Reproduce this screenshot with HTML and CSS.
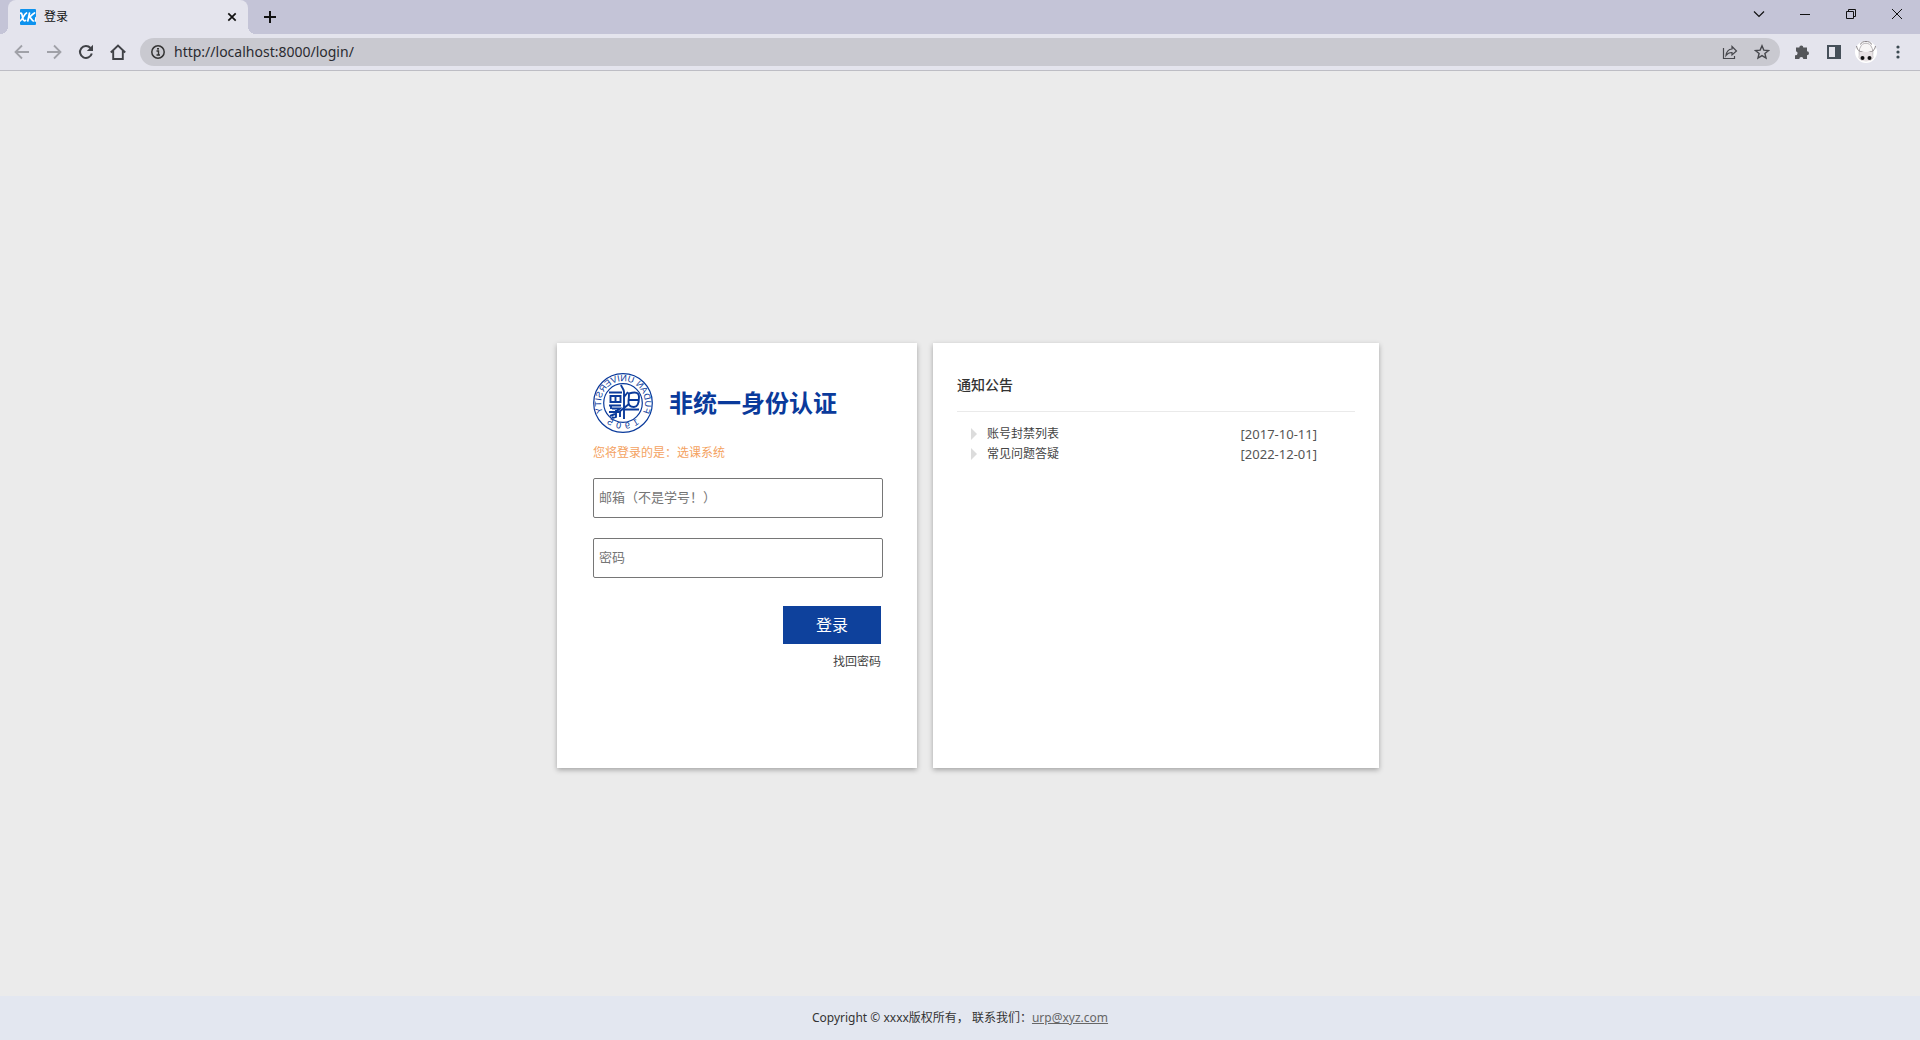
FILE: index.html
```html
<!DOCTYPE html>
<html lang="zh-CN">
<head>
<meta charset="utf-8">
<title>登录</title>
<link rel="stylesheet" href="styles.css">
</head>
<body>
<header class="browser">
  <div class="tabstrip">
    <div class="tab">
      <svg class="favicon" viewBox="0 0 16 16" width="16" height="16" aria-hidden="true"><rect width="16" height="16" rx="1" fill="#0d92ee"/><g fill="none" stroke="#fff" stroke-width="1.7" stroke-linecap="round"><path d="M0 4.500c2-1 2 1 2.500 3.500s1 4.500 3 3.500M6.500 4C4 5 3 10.500 0 12M9.500 4L7.800 12M14.500 4c-2 1-3.500 3-5.500 4.500 2.500-.5 2.500 3.500 4.500 3.500M16 8.500l-.5 3.500"/></g></svg>
      <span class="tab-title">登录</span>
      <button class="icon-btn tab-close" aria-label="关闭"><svg viewBox="0 0 16 16" width="16" height="16"><path d="M4.300 4.300l7.400 7.400M11.700 4.300l-7.400 7.400" stroke="#111" stroke-width="1.700"/></svg></button>
    </div>
    <button class="icon-btn new-tab" aria-label="新标签页"><svg viewBox="0 0 16 16" width="16" height="16"><path d="M8 2v12M2 8h12" stroke="#111" stroke-width="2"/></svg></button>
    <div class="window-controls">
      <button class="icon-btn" aria-label="搜索标签页"><svg viewBox="0 0 16 16" width="16" height="16"><path d="M3 5.500l5 5 5-5" fill="none" stroke="#111" stroke-width="1.200"/></svg></button>
      <button class="icon-btn" aria-label="最小化"><svg viewBox="0 0 16 16" width="16" height="16"><path d="M3 8.500h10" stroke="#111"/></svg></button>
      <button class="icon-btn" aria-label="还原"><svg viewBox="0 0 16 16" width="16" height="16"><path d="M3.500 5.500h7v7h-7zM5.500 5.500v-2h7v7h-2" fill="none" stroke="#111"/></svg></button>
      <button class="icon-btn" aria-label="关闭窗口"><svg viewBox="0 0 16 16" width="16" height="16"><path d="M3 3l10 10M13 3L3 13" stroke="#111"/></svg></button>
    </div>
  </div>
  <div class="toolbar">
    <button class="icon-btn" aria-label="后退"><svg viewBox="0 0 16 16" width="16" height="16"><path d="M15 8H2M8 1.500L1.500 8 8 14.500" fill="none" stroke="#a0a1a8" stroke-width="1.800"/></svg></button>
    <button class="icon-btn" aria-label="前进"><svg viewBox="0 0 16 16" width="16" height="16"><path d="M1 8h13M8 1.500L14.500 8 8 14.500" fill="none" stroke="#a0a1a8" stroke-width="1.800"/></svg></button>
    <button class="icon-btn" aria-label="刷新"><svg viewBox="0 0 16 16" width="16" height="16"><path d="M13.800 9.500A6 6 0 1 1 12.500 4" fill="none" stroke="#404247" stroke-width="2"/><path d="M15 .8V7H8.800z" fill="#404247"/></svg></button>
    <button class="icon-btn" aria-label="主页"><svg viewBox="0 0 16 16" width="16" height="16"><path d="M.8 8.500L8 1.500l7.200 7M3.200 7v8h9.600V7" fill="none" stroke="#404247" stroke-width="1.900"/></svg></button>
    <div class="address">
      <svg viewBox="0 0 16 16" width="16" height="16" aria-hidden="true"><circle cx="8" cy="8" r="6.200" fill="none" stroke="#333" stroke-width="1.500"/><path d="M6.500 7h2v4M6.500 11h3.500" fill="none" stroke="#333" stroke-width="1.400"/><rect x="7" y="4" width="2" height="1.600" fill="#333"/></svg>
      <input class="url" type="text" aria-label="地址" value="http://localhost:8000/login/">
      <button class="icon-btn" aria-label="分享"><svg viewBox="0 0 16 16" width="16" height="16"><path d="M1.500 4v10.500h11V12M10 2.500L14.500 7 10 11V8.500C7 8.300 5.500 9.500 4 11.500 4.500 7.500 6.500 5.300 10 5z" fill="none" stroke="#46474c" stroke-width="1.200"/></svg></button>
      <button class="icon-btn" aria-label="收藏"><svg viewBox="0 0 16 16" width="16" height="16"><path d="M8 1.800l1.800 4.300 4.700.4-3.600 3 1.100 4.600L8 11.600l-4 2.500 1.100-4.600-3.600-3 4.700-.4z" fill="none" stroke="#46474c" stroke-width="1.400"/></svg></button>
    </div>
    <button class="icon-btn" aria-label="扩展程序"><svg viewBox="0 0 16 16" width="16" height="16"><path d="M2 3.500h3.300a2 2 0 1 1 4 0H13v3.700a2 2 0 1 1 0 4V15H9.300a2 2 0 0 0-4 0H1v-3.800a2 2 0 0 0 1-4z" fill="#54565a"/></svg></button>
    <button class="icon-btn" aria-label="侧边栏"><svg viewBox="0 0 16 16" width="16" height="16"><path d="M1 1h14v14H1zM3 3v10h6V3z" fill="#46505a" fill-rule="evenodd"/></svg></button>
    <button class="icon-btn avatar" aria-label="个人资料"><svg viewBox="0 0 22 22" width="22" height="22"><circle cx="11" cy="11" r="11" fill="#fff"/><path d="M5.500 6C3 10 5 14 4 16c0 5 14 5 14 0-1-2 1-6-1.500-10C15 1 7 1 5.500 6z" fill="#f8f6f6" stroke="#aaa5a8" stroke-width=".8"/><path d="M1.500 5c.5 3 2 5 4 5.500 3 1.500 8 1.500 11 0 2-.5 3.500-2.500 4-5.500M5.500 3.500C6 1 9 .5 11 .5s5 .5 5.500 3" fill="none" stroke="#8b8589" stroke-width="1"/><path d="M5 11h12l1 6-3 3H7l-3-3z" fill="#e8e2e4"/><circle cx="7.500" cy="17" r="2" fill="#111"/><circle cx="14.500" cy="17" r="2" fill="#111"/></svg></button>
    <button class="icon-btn" aria-label="菜单"><svg viewBox="0 0 16 16" width="16" height="16" fill="#3c4a52"><circle cx="8" cy="3" r="1.600"/><circle cx="8" cy="8" r="1.600"/><circle cx="8" cy="13" r="1.600"/></svg></button>
  </div>
</header>

<main class="page">
  <section class="card login">
    <div class="brand">
      <svg class="emblem" viewBox="0 0 60 60" width="60" height="60" role="img" aria-label="校徽">
        <defs>
          <path id="arc-top" d="M14.400 45.600A22 22 0 1 1 45.600 45.600"/>
          <path id="arc-bottom" d="M7 43A27 27 0 0 0 53 43"/>
        </defs>
        <g transform="matrix(-1 0 0 1 60 0)" fill="#0a3a9b">
          <circle cx="30" cy="30" r="29.300" fill="none" stroke="#0a3a9b" stroke-width="1.200"/>
          <circle cx="30" cy="30" r="19.300" fill="none" stroke="#0a3a9b" stroke-width="1.200"/>
          <text class="emblem-text"><textPath href="#arc-top" startOffset="50%" text-anchor="middle">FUDAN UNIVERSITY</textPath></text>
          <text class="emblem-text"><textPath href="#arc-bottom" startOffset="50%" text-anchor="middle">1&#160;&#160;9&#160;&#160;0&#160;&#160;5</textPath></text>
        </g>
        <g fill="none" stroke="#0a3a9b" stroke-width="1.900">
          <path d="M28 12c1 3 3 4 3 7v27M31 24l4-5M26 39l10-8"/>
          <path d="M36 20.500c7-2 10-1 10 3.500s-1 10-5 10-6-2-5.500-6 .5-4 .5-7.500zM36 27h9M31 36.500h15"/>
          <path d="M16 19.500h13M17.500 23h10v6h-10zM22.500 23v6M16 32.500h12M19 35.500h8l-5 4M16 39h12M23 37v7c-2 1-3 1-4 0M22 41l-5 2M18 32v4M27 38v6"/>
        </g>
      </svg>
      <h1 class="title">非统一身份认证</h1>
    </div>
    <p class="target">您将登录的是：选课系统</p>
    <form class="form">
      <input class="field" type="text" aria-label="邮箱" placeholder="邮箱（不是学号！）">
      <input class="field" type="password" aria-label="密码" placeholder="密码">
      <button class="submit" type="button">登录</button>
      <a class="recover" href="#">找回密码</a>
    </form>
  </section>
  <section class="card notices">
    <h2 class="notices-title">通知公告</h2>
    <ul class="notice-list">
      <li class="notice"><a href="#">账号封禁列表</a><time>[2017-10-11]</time></li>
      <li class="notice"><a href="#">常见问题答疑</a><time>[2022-12-01]</time></li>
    </ul>
  </section>
</main>
<footer class="footer">Copyright © xxxx版权所有，&nbsp;联系我们：<a href="mailto:urp@xyz.com">urp@xyz.com</a></footer>
</body>
</html>
```
FILE: styles.css
```css
* { box-sizing: border-box; }

body {
  margin: 0;
  min-height: 100vh;
  display: flex;
  flex-direction: column;
  background: #ebebeb;
  color: #333;
  font: 12px/20px "Noto Sans", "Noto Sans CJK SC", sans-serif;
}

h1, h2, p, ul { margin: 0; padding: 0; }

.icon-btn {
  display: grid;
  place-items: center;
  flex: none;
  padding: 0;
  border: 0;
  background: none;
}

.tabstrip {
  display: flex;
  align-items: center;
  height: 34px;
  padding-left: 8px;
  background: #c4c4d7;
}

.tab {
  position: relative;
  display: flex;
  align-items: center;
  gap: 8px;
  width: 240px;
  height: 34px;
  padding: 0 8px 0 12px;
  border-radius: 8px 8px 0 0;
  background: #e4e4ed;
  color: #111;
}

.tab::before,
.tab::after {
  content: "";
  position: absolute;
  bottom: 0;
  width: 8px;
  height: 8px;
}

.tab::before {
  left: -8px;
  background: radial-gradient(circle at 0 0, #c4c4d7 8px, #e4e4ed 8px);
}

.tab::after {
  right: -8px;
  background: radial-gradient(circle at 100% 0, #c4c4d7 8px, #e4e4ed 8px);
}

.tab-title { flex: 1; }

.new-tab { margin-left: 14px; }

.window-controls {
  display: flex;
  gap: 30px;
  margin: 0 15px 6px auto;
}

.toolbar {
  display: flex;
  align-items: center;
  gap: 16px;
  height: 37px;
  padding: 0 14px;
  border-bottom: 1px solid #bdbdc4;
  background: #e4e4ed;
}

.address {
  flex: 1;
  display: flex;
  align-items: center;
  gap: 16px;
  height: 28px;
  margin: 0 -2px;
  padding: 0 10px;
  border-radius: 14px;
  background: #c9c9d0;
}

.avatar { margin: 0 -3px; }

.url {
  flex: 1;
  min-width: 0;
  margin-left: -8px;
  padding: 0;
  border: 0;
  background: none;
  color: #2b2b30;
  font: 14px/20px "Noto Sans", sans-serif;
}

.page {
  flex: 1;
  display: flex;
  justify-content: center;
  align-items: center;
  gap: 16px;
  padding: 44px 0 0 16px;
}

.card {
  min-height: 425px;
  background: #fff;
  box-shadow: 0 2px 5px rgba(0, 0, 0, .3);
}

.login {
  width: 360px;
  padding: 30px 34px 30px 36px;
}

.brand {
  display: flex;
  align-items: center;
  gap: 16px;
}

.emblem-text {
  font: 400 9px "Liberation Sans", sans-serif;
}

.title {
  color: #0a3a9b;
  font-size: 24px;
  line-height: 36px;
}

.target {
  margin: 10px 0 15px;
  color: #f4a261;
}

.form {
  display: flex;
  flex-direction: column;
}

.field {
  height: 40px;
  margin-bottom: 20px;
  padding: 0 5px 2px;
  border: 1px solid #767676;
  border-radius: 2px;
  font: 13px/20px "Noto Sans", "Noto Sans CJK SC", sans-serif;
}

.field::placeholder { color: #757575; }

.submit {
  align-self: flex-end;
  width: 98px;
  height: 38px;
  margin: 8px 2px;
  padding: 0;
  border: 0;
  background: #0e419c;
  color: #fff;
  font: 16px/24px "Noto Sans", "Noto Sans CJK SC", sans-serif;
}

.recover {
  align-self: flex-end;
  margin-right: 2px;
  color: #444;
  text-decoration: none;
}

.notices {
  width: 446px;
  padding: 32px 24px;
}

.notices-title {
  padding-bottom: 16px;
  border-bottom: 1px solid #eaeaea;
  font-size: 14px;
  font-weight: 500;
  line-height: 20px;
}

.notice-list {
  padding: 12px 38px 0 14px;
  list-style: none;
}

.notice {
  display: flex;
  align-items: center;
  color: #555;
}

.notice::before {
  content: "";
  margin-right: 10px;
  border: 6px solid transparent;
  border-right-width: 0;
  border-left-color: #dcdcdc;
}

.notice a {
  flex: 1;
  color: #444;
  text-decoration: none;
}

.notice time { font-size: 13px; }

.footer {
  padding: 12px;
  background: #e3e7f0;
  text-align: center;
}

.footer a { color: #666; }
```
